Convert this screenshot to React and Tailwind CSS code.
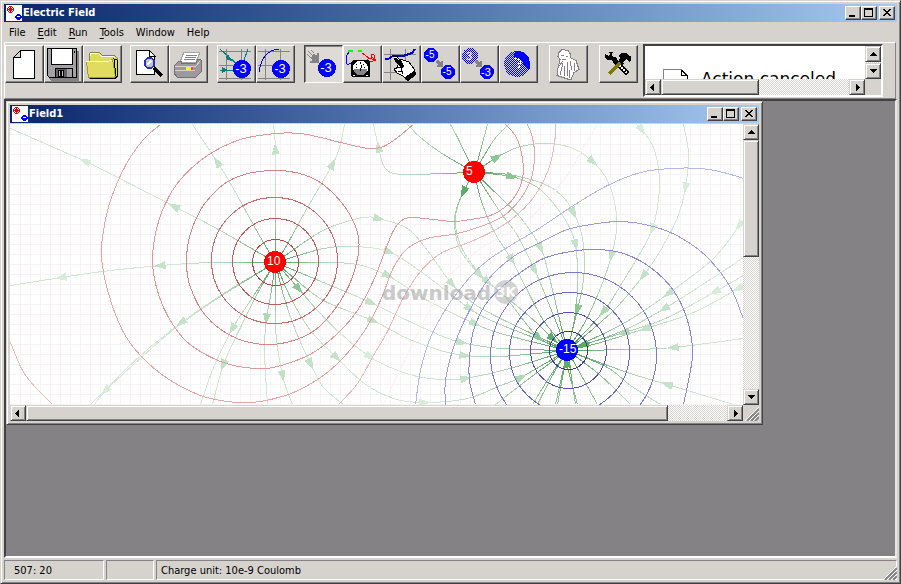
import React from "react";

/* ---------- window chrome ---------- */

const raised =
  "bg-[#d6d3ce] border border-t-[#d6d3ce] border-l-[#d6d3ce] border-r-[#424142] border-b-[#424142] shadow-[inset_1px_1px_0_#fff,inset_-1px_-1px_0_#848284]";
const button =
  "bg-[#d6d3ce] border border-t-white border-l-white border-r-[#424142] border-b-[#424142] shadow-[inset_-1px_-1px_0_#848284]";
const track =
  "bg-[repeating-conic-gradient(#d6d3ce_0_25%,#fff_0_50%)] bg-[length:2px_2px]";

function AppIcon() {
  return (
    <svg width="16" height="16" viewBox="0 0 16 16" shapeRendering="crispEdges" className="shrink-0">
      <rect width="16" height="16" fill="#fff" />
      <path d="M3 1h3v1h1v1h1v3h-1v1h-1v1h-3v-1h-1v-1h-1v-3h1v-1h1z" fill="#d8000c" />
      <path d="M3 2h1v1h-1zM5 2h1v1h-1zM2 3h1v1h-1zM6 3h1v1h-1zM2 5h1v1h-1zM6 5h1v1h-1zM3 6h1v1h-1zM5 6h1v1h-1z" fill="#fff" />
      <path d="M11 9h3v1h1v1h1v2h-1v1h-1v1h-3v-1h-1v-1h-1v-2h1v-1h1z" fill="#00f" />
      <rect x="11" y="11" width="3" height="1" fill="#fff" />
    </svg>
  );
}

function CaptionButtons() {
  const cls = `${button} flex h-3.5 w-4 items-center justify-center`;
  return (
    <div className="flex pr-0.5">
      <button aria-label="Minimize" className={cls}>
        <svg width="12" height="10" shapeRendering="crispEdges"><path d="M2 7h6v2H2z" /></svg>
      </button>
      <button aria-label="Maximize" className={cls}>
        <svg width="12" height="10" shapeRendering="crispEdges">
          <path d="M1 0h9v9H1zM2 2v6h7V2z" fillRule="evenodd" />
        </svg>
      </button>
      <button aria-label="Close" className={`${cls} ml-0.5`}>
        <svg width="12" height="10" shapeRendering="crispEdges">
          <path d="M2 1h2v1h1v1h2V2h1V1h2v1H9v1H8v1H7v1h1v1h1v1h1v1H8V7H7V6H5v1H4v1H2V7h1V6h1V5h1V4H4V3H3V2H2z" />
        </svg>
      </button>
    </div>
  );
}

function TitleBar({ title }) {
  return (
    <header className="flex h-[18px] shrink-0 items-center bg-linear-to-r from-[#0a246a] to-[#a6caf0] pl-0.5">
      <AppIcon />
      <h1 className="flex-1 pl-px text-[11px] leading-4 font-bold text-white">{title}</h1>
      <CaptionButtons />
    </header>
  );
}

const arrows = {
  up: "M4 2h1v1h1v1h1v1h1v1H1V5h1V4h1V3h1z",
  down: "M1 2h7v1H7v1H6v1H5v1H4V5H3V4H2V3H1z",
  left: "M5 1v7H4V7H3V6H2V5H1V4h1V3h1V2h1V1z",
  right: "M3 1v7h1V7h1V6h1V5h1V4H6V3H5V2H4V1z",
};

function ScrollButton({ dir }) {
  return (
    <button aria-label={`Scroll ${dir}`} className={`${raised} flex size-4 shrink-0 items-center justify-center`}>
      <svg width="9" height="9" shapeRendering="crispEdges"><path d={arrows[dir]} /></svg>
    </button>
  );
}

function Grip() {
  return (
    <svg width="14" height="14" viewBox="0 0 14 14" className="shrink-0" stroke="#848284" strokeWidth="2">
      <path d="M2 14 14 2M6 14 14 6M10 14l4-4" />
      <path d="M0 14 14 0M4 14 14 4M8 14l6-6" stroke="#fff" strokeWidth="1" />
    </svg>
  );
}

/* ---------- toolbar icons ---------- */

function Svg({ children }) {
  return (
    <svg width="36" height="34" viewBox="0 0 36 34" shapeRendering="crispEdges" fill="none" className="shrink-0">
      {children}
    </svg>
  );
}

const Ball = ({ x, y, r = 9, t = "-3", s = 13, fill = "#00f" }) => (
  <>
    <circle cx={x} cy={y} r={r} fill={fill} />
    <text x={x - 1} y={y + Math.round(s / 3)} fontSize={s} fill="#fff" textAnchor="middle" fontFamily="'Liberation Sans', Arial, sans-serif">
      {t}
    </text>
  </>
);

const Grid = () => (
  <path d="M1 4.500h32M1 18.500h32M1 31.500h32M8.500 2v31M23.500 2v31" stroke="#848284" />
);

const SmallArrow = ({ x, y }) => (
  <path transform={`translate(${x} ${y})`} d="M1 0h2v1h1v1h1v-1h2v6h-6v-2h1v-1h-1v-1h-1v-2h1z" fill="#848284" />
);

const icons = {
  New: (
    <Svg>
      <path d="M14.500 3.500h14v28h-21v-21z" fill="#fff" stroke="#000" />
      <path d="M14.500 3.500v7h-7z" fill="#d6d3ce" stroke="#000" />
    </Svg>
  ),
  Save: (
    <Svg>
      <path d="M4 4h30v30H6l-2-2z" fill="#848284" />
      <path d="M2.500 1.500h29v29h-27l-2-2z" fill="#a5a2a5" stroke="#000" />
      <path d="M6.500 1.500h21v16h-21z" fill="#fff" stroke="#000" />
      <path d="M29 4h1v2h-1z" fill="#000" />
      <path d="M10.500 21.500h17v9h-17z" fill="#636163" stroke="#000" />
      <path d="M13.500 23.500h5v6h-5z" fill="#c6c3c6" stroke="#000" />
      <path d="M15 24h2v5h-2z" fill="#000" />
      <path d="M22 22h5v8h-5z" fill="#a5a2a5" />
    </Svg>
  ),
  Open: (
    <Svg>
      <path d="M5 10V7l2-2h8l3 3h12l3 3v18l-2 2H5z" fill="#dedb58" stroke="#848242" />
      <path d="M6 9V7l2-1h6l3 3h12l2 2" stroke="#fff" />
      <path d="M2.500 14.500h22l3-2h1l3 17-2 1h-25z" fill="#e0dc60" stroke="#a09c30" />
      <path d="M2 14h23l3-1" stroke="#fffbc0" />
      <path d="M6 31.500h25l2-2V13l-3-1 2 17" stroke="#000" />
    </Svg>
  ),
  Preview: (
    <Svg>
      <path d="M5.500 3.500h13l5 5v19h-18z" fill="#fff" stroke="#000" />
      <path d="M18.500 3.500v6h6z" stroke="#000" fill="#fff" />
      <path d="m23 21 8 8" stroke="#000" strokeWidth="3" />
      <circle cx="18.500" cy="16" r="5" fill="#c6c3c6" stroke="#2734b8" strokeWidth="2" />
      <path d="m16 18 4-4" stroke="#fff" strokeWidth="2" />
    </Svg>
  ),
  Print: (
    <Svg>
      <path d="M14 5h16l-4 10H10z" fill="#fff" stroke="#a5a2a5" />
      <path d="M16 8h11M15 10h11M14 12h11" stroke="#848284" />
      <path d="m4 19 5-5h2v2h15l2-4 3 1v12l-5 5H7l-3-4z" fill="#9c9a9c" stroke="#737173" />
      <path d="M5 19h21l4-5M5 23h20" stroke="#d6d3ce" />
      <path d="M16 20h7v3h-7z" fill="#ff0" /><path d="M21 20h2v3h-2z" fill="#f44" />
    </Svg>
  ),
  "Field lines": (
    <Svg>
      <Grid />
      <path d="m2 2 18 16M2 23h18M30 2l-5 14" stroke="#007f7c" />
      <path d="m8 9 2-2 4 7-5-1zM4 20l6 3-6 3z" fill="#007f7c" />
      <Ball x={24} y={22} />
    </Svg>
  ),
  Equipotential: (
    <Svg>
      <Grid />
      <path d="M2 25c2-14 8-22 20-23" stroke="#0000c8" />
      <Ball x={24} y={22} />
    </Svg>
  ),
  "Move charge": (
    <Svg>
      <path d="m2 7 4 4M3 4l5 5M6 3l3 3" stroke="#848284" />
      <path d="M8 7h2v1h2V6h2v10H5v-2h2v-2H6v-2h1V8h1z" fill="#848284" />
      <Ball x={22} y={21} />
    </Svg>
  ),
  Measure: (
    <Svg>
      <path d="M3 17c-2-3-1-9 2-12M3 18l4-2" stroke="#00f" />
      <path d="M4 4h5M14 4h4" stroke="#0f0" strokeWidth="2" />
      <path d="m18 6 7 5 6 2-1-5-2-1-1 3 5 3M25 11l-2 2 4 2 4-2" stroke="#f00" />
      <path d="M9 13h15l2 2v14l-1 1H9l-2-1V15z" fill="#000" />
      <path d="M14 14h5l4 3 1 3v3l-3 3h-9l-3-3v-3l1-3z" fill="#fff" />
      <path d="M10 22h13v2l-3 4h-7l-3-4z" fill="#848284" />
      <path d="m16 24 2-6M12 20l1 1M21 20l-1 1M16 15v2M12 17l1 1M20 17l-1 1" stroke="#000" />
      <path d="M9 28h2M22 28h2" stroke="#fff" />
    </Svg>
  ),
  "Draw line": (
    <Svg>
      <path d="M7.500 2v31M22.500 2v31M1 7.500h32M1 25.500h18" stroke="#848284" />
      <path d="M2 12h3l5-3h10l9-3 3-4" stroke="#00c" strokeWidth="2" />
      <path d="m17 12 9 3 5 7 1 3-9 6-5-3-4-2-3-4 3-1z" fill="#fff" stroke="#000" />
      <path d="m10 8 5 2 4 5 2 4-2 2-5-4-3-5z" fill="#000" />
      <path d="m11 10 3 1 2 2" stroke="#fff" />
      <path d="m13 21 5-1 1 4m-4 1 4-1 1 3" stroke="#000" />
      <path d="m22 30 9-6 2 2v2l-8 6-2-1z" fill="#000" />
    </Svg>
  ),
  "Copy charge": (
    <Svg>
      <Ball x={9} y={8} r={7} t="-5" s={10} />
      <SmallArrow x={14} y={13} />
      <Ball x={26} y={25} r={7} t="-5" s={10} />
    </Svg>
  ),
  "Change charge": (
    <Svg>
      <Ball x={9} y={9} r={8} t="3" s={11} fill="url(#dither)" />
      <SmallArrow x={14} y={13} />
      <Ball x={26} y={25} r={7} t="-3" s={11} />
    </Svg>
  ),
  "Invert charge": (
    <Svg>
      <circle cx="17" cy="17" r="13" fill="url(#dither)" />
      <path d="M15 4h5l5 2 4 5 1 5v5l-1 2-5-4-1-5-4-3-5-1z" fill="#00f" />
      <path d="m14 11 6 2 1 3-3 1 2 2-2 3" stroke="#fff" />
    </Svg>
  ),
  Ghost: (
    <Svg>
      <path d="m12 2.500 6 1 2 3v4l6 3 3 9-5 3-3 7h-2l-6-2-6-2 1-7 2-9-2-3 1-4z" fill="#fff" stroke="#848284" />
      <path d="M11 8h3M16 9h2M12 12l4 1M13 16l-3 12M15 19l-1 10M17 15l1 6-1 8M20 14l2 9M24 16l1 8M20 23l-1 8M9 19l4-5" stroke="#848284" />
    </Svg>
  ),
  Options: (
    <Svg>
      <path d="m15 14 13 13" stroke="#000" strokeWidth="5" />
      <path d="m15 14 12 12" stroke="#fff" strokeWidth="2" strokeDasharray="2 1" />
      <path d="m9 27 12-12" stroke="#7f7a00" strokeWidth="4" />
      <path d="M9 5h4l-1 3 1 2h3l2 4-3 3-4-4H7l-2-3V7l4 2 1-2z" fill="#000" />
      <path d="m18 9 3-3h5l3 3h2v5l-2 1-3-3-3 3 1 2-2 1-3-4 1-4z" fill="#000" />
    </Svg>
  ),
};

const groups = [
  { gap: "", names: ["New", "Save", "Open"] },
  { gap: "ml-2", names: ["Preview", "Print"] },
  { gap: "ml-[9px]", names: ["Field lines", "Equipotential"] },
  { gap: "ml-[9px]", names: ["Move charge", "Measure", "Draw line", "Copy charge", "Change charge", "Invert charge"] },
  { gap: "ml-[11px]", names: ["Ghost"] },
  { gap: "ml-[11px]", names: ["Options"] },
];

function ToolButton({ name }) {
  const pressed = name === "Move charge";
  const look = pressed
    ? "border border-t-[#424142] border-l-[#424142] border-r-white border-b-white bg-[#dedbd6] shadow-[inset_1px_1px_0_#848284]"
    : button;
  return (
    <button aria-label={name} aria-pressed={pressed} className={`${look} flex h-[38px] w-[39px] shrink-0 items-center justify-start`}>
      {icons[name]}
    </button>
  );
}

function HelpPane() {
  return (
    <section className="mt-px ml-[5px] flex h-[53px] w-60 shrink-0 flex-col border-2 border-t-[#424142] border-r-white border-b-white border-l-[#424142] bg-[#d6d3ce]">
      <div className="flex h-[33px]">
        <div className="flex flex-1 items-start gap-3 overflow-hidden bg-white pt-[23px] pl-[18px]">
          <svg width="26" height="30" viewBox="0 0 26 30" shapeRendering="crispEdges" fill="none" className="shrink-0">
            <path d="M.5 30V.5h18" stroke="#848284" />
            <path d="M18.500 1v5h6v24M18.500 1l6 6" stroke="#000" />
          </svg>
          <p className="font-['DejaVu_Sans',sans-serif] text-[17px] leading-5 whitespace-nowrap">Action canceled</p>
        </div>
        <div className={`${track} flex flex-col justify-between`}>
          <ScrollButton dir="up" />
          <ScrollButton dir="down" />
        </div>
      </div>
      <div className={`${track} mr-4 flex h-4`}>
        <ScrollButton dir="left" />
        <div className={`${raised} w-[98px]`} />
        <span className="flex-1" />
        <ScrollButton dir="right" />
      </div>
    </section>
  );
}

/* ---------- field plot ---------- */

// Catmull-Rom spline through the points, as an SVG path
function spline(pts, closed) {
  const n = pts.length;
  const at = (i) => (closed ? pts[(i + n) % n] : pts[Math.max(0, Math.min(n - 1, i))]);
  let d = `M${pts[0][0]} ${pts[0][1]}`;
  for (let i = 0; i < (closed ? n : n - 1); i++) {
    const [a, b, c, e] = [at(i - 1), at(i), at(i + 1), at(i + 2)];
    d += `C${b[0] + (c[0] - a[0]) / 6} ${b[1] + (c[1] - a[1]) / 6} ${c[0] - (e[0] - b[0]) / 6} ${c[1] - (e[1] - b[1]) / 6} ${c[0]} ${c[1]}`;
  }
  return d;
}

const P = [275, 262];
const Q = [474, 172];
const N = [567, 350];

const contours = [
  { c: "#d88484", closed: true, p: [[186, 262], [190, 233], [205, 202], [233, 178], [275, 170], [313, 178], [341, 202], [357, 232], [357, 258], [345, 292], [320, 325], [296, 339], [265, 344], [232, 336], [205, 315], [190, 287]] },
  { c: "#e09898", p: [[413, 124], [397, 137], [383, 146], [368, 148], [340, 142], [320, 137], [300, 133], [275, 133], [240, 139], [207, 155], [180, 179], [164, 205], [155, 233], [152, 260], [156, 287], [167, 315], [184, 339], [207, 355], [233, 365], [265, 368], [290, 362], [313, 352], [337, 333], [357, 310], [373, 280], [384, 252], [392, 232], [400, 221], [410, 217], [433, 219], [453, 221], [470, 219], [490, 215], [504, 207], [515, 195], [522, 178], [522, 158], [516, 137], [505, 124]] },
  { c: "#e6a6a6", p: [[160, 124], [143, 139], [125, 165], [110, 200], [103, 230], [101, 257], [108, 293], [122, 330], [140, 355], [167, 378], [200, 395], [227, 401], [250, 402], [270, 399], [293, 392], [320, 377], [343, 357], [363, 332], [380, 300], [393, 267], [407, 248], [427, 238], [457, 233], [483, 225], [502, 216], [518, 201], [530, 180], [534, 157], [532, 137], [527, 124]] },
  { c: "#ecb8b8", p: [[10, 342], [22, 370], [36, 388], [52, 404]] },
  { c: "#ecb8b8", p: [[338, 404], [357, 383], [373, 355], [387, 331], [403, 297], [420, 271], [440, 253], [468, 242], [488, 233], [511, 219], [533, 197], [548, 169], [554, 143], [555, 124]] },
  { c: "#fbf0f0", p: [[383, 404], [403, 362], [432, 304], [454, 270], [480, 248], [527, 220], [563, 180], [583, 147], [597, 124]] },
  { c: "#868ad2", p: [[475, 404], [469, 380], [469, 357], [473, 330], [485, 304], [501, 287], [520, 272], [543, 258], [570, 251], [597, 249], [623, 253], [650, 267], [673, 290], [687, 320], [692, 355], [683, 404]] },
  { c: "#9a9edc", p: [[445, 404], [445, 380], [453, 347], [467, 314], [487, 280], [513, 256], [540, 242], [567, 229], [597, 223], [623, 221], [653, 226], [680, 237], [707, 257], [730, 287], [743, 319]] },
  { c: "#b4b6e6", p: [[415, 404], [420, 370], [430, 337], [447, 306], [470, 276], [487, 260], [510, 245], [540, 227], [573, 205], [607, 185], [640, 172], [670, 168], [700, 168], [723, 172], [743, 178]] },
];

const rings = [
  [275, 262, 23, "#b84848"], [275, 261, 43, "#c45c5c"], [274, 260, 63, "#cc6c6c"],
  [568, 350, 19, "#34389c"], [568, 350, 38, "#5054b0"], [569, 352, 60, "#686cc0"], [573, 355, 83, "#787cc8"],
];

// Points run along the field direction; a truthy third value puts an arrowhead there
const lines = [
  [P, [218, 229], [174, 206, 1], [127, 182], [85, 161, 1], [10, 128]],
  [P, [260, 237], [230, 183], [217, 162, 1], [192, 124]],
  [P, [275, 200], [275, 149, 1], [273, 124]],
  [P, [285, 247], [307, 207], [332, 164, 1], [339, 147], [344, 124]],
  [P, [213, 262], [160, 265, 1], [102, 271], [61, 277, 1], [10, 285]],
  [P, [220, 295], [181, 322, 1], [140, 355], [104, 390], [90, 404]],
  [P, [220, 296], [177, 326], [142, 356], [105, 390, 1], [94, 404]],
  [P, [250, 300], [232, 328, 1], [213, 367], [200, 404]],
  [P, [258, 291], [240, 327], [223, 364, 1], [212, 404]],
  [P, [271, 290], [266, 318, 1], [264, 345], [265, 373], [267, 404]],
  [P, [275, 327], [282, 375, 1], [292, 404]],
  [P, [283, 295], [295, 330], [310, 363, 1], [323, 387], [343, 404]],
  [P, [290, 297], [310, 330], [336, 357, 1], [364, 383], [393, 398], [423, 402, 1], [467, 398], [500, 385], [520, 377, 1], N],
  [P, [298, 288, 1], [317, 310], [340, 333], [369, 356, 1], [390, 367], [417, 376], [443, 379], [465, 378, 1], [513, 367], N],
  [P, [293, 277], [323, 300], [372, 320, 1], [407, 338], [440, 350], [464, 355, 1], [500, 356], N],
  [P, [323, 282], [370, 302, 1], [407, 320], [440, 335], [461, 342, 1], [500, 348], N],
  [P, [323, 262], [357, 264], [387, 275, 1], [427, 300], [474, 323, 1], [500, 333], N],
  [P, [323, 248], [353, 246], [388, 251, 1], [423, 273], [469, 308, 1], [500, 324], N],
  [P, [317, 233], [340, 223], [363, 217], [378, 218, 1], [407, 228], [427, 250], [451, 283, 1], [473, 303], [500, 318], N],
  [Q, [440, 173], [417, 174], [393, 173], [383, 165], [378, 147, 1], [373, 124]],
  [Q, [440, 152], [420, 137], [407, 124]],
  [Q, [457, 137], [450, 124]],
  [Q, [480, 150], [487, 124]],
  [Q, [493, 140], [508, 124]],
  [Q, [496, 157, 1], [517, 147], [543, 143], [570, 147], [592, 161, 1], [607, 180], [615, 207], [616, 230], [611, 255, 1], [603, 280], [587, 317], N],
  [Q, [511, 176, 1], [537, 187], [553, 203], [567, 223], [575, 244, 1], [577, 277], [575, 313], N],
  [Q, [500, 173], [523, 177], [547, 185], [563, 197], [573, 212, 1], [581, 233], [584, 260], [582, 287], [577, 309, 1], N],
  [Q, [503, 200], [520, 217], [540, 247, 1], [548, 273], [560, 323], N],
  [Q, [500, 212], [517, 235], [534, 269, 1], [547, 300], N],
  [Q, [480, 198], [493, 230], [511, 259, 1], [527, 290], [543, 320], N],
  [Q, [463, 191, 1], [456, 210], [455, 226], [460, 245], [471, 263], [487, 281, 1], [510, 300], [537, 323], [552, 338, 1], N],
  [Q, [463, 191], [455, 212], [454, 226], [460, 250], [479, 274, 1], [505, 297], [538, 337, 1], N],
  [[636, 124], [641, 129, 1], [653, 147], [659, 177], [657, 207], [652, 228, 1], [643, 247], [623, 280], [603, 311, 1], N],
  [[683, 124], [688, 153], [685, 187, 1], [677, 217], [660, 250], [643, 275, 1], [613, 310], N],
  [[743, 220], [739, 225, 1], [713, 258], [668, 293, 1], [623, 323], N],
  [[743, 257], [713, 277], [664, 308, 1], [623, 330], N],
  [[743, 275], [715, 291, 1], [665, 318], [624, 332, 1], [583, 344, 1], N],
  [[743, 286], [738, 288, 1], [693, 312], [645, 328, 1], [600, 342], N],
  [[743, 338], [673, 347, 1], [630, 349], N],
  [[733, 404], [697, 393], [667, 384, 1], [627, 372], N],
  [[660, 404], [630, 385], [607, 367], N],
  [[630, 404], [600, 375], N],
  [[597, 404], N],
  [[577, 404], [566, 362, 1], N],
  [[575, 404], N],
  [[557, 404], N],
  [[555, 404], N],
  [[537, 404], [553, 373], N],
  [[532, 404], [550, 375], N],
  [[495, 404], [530, 377], N],
];

const paths = lines.map((l) => spline(l)).join("");

let gridPath = "";
for (let x = 20; x < 743; x += 10) gridPath += `M${x} 124h1v281h-1z`;
for (let y = 134; y < 405; y += 10) gridPath += `M10 ${y}h733v1H10z`;

const heads = lines.flatMap((l) =>
  l.flatMap((pt, i) => {
    if (!pt[2]) return [];
    const a = l[i - 1];
    const b = l[i + 1] || pt;
    const angle = (Math.atan2(b[1] - a[1], b[0] - a[0]) * 180) / Math.PI;
    const near = Math.min(...[P, Q, N].map((c) => Math.hypot(c[0] - pt[0], c[1] - pt[1])));
    const fill = near < 24 ? "#5cac68" : near < 45 ? "#8cc694" : near < 75 ? "#b0d8b4" : near < 130 ? "#c4e2c8" : "#d8ecda";
    return [{ x: pt[0], y: pt[1], angle, fill }];
  })
);

function Charge({ at, value, color }) {
  return (
    <>
      <circle cx={at[0]} cy={at[1]} r="11" fill={color} />
      <text x={at[0] - 8} y={at[1] + 3} fill="#fff" fontSize="12" fontFamily="'Liberation Sans', Arial, sans-serif">
        {value}
      </text>
    </>
  );
}

function FieldPlot() {
  return (
    <svg viewBox="10 124 733 281" preserveAspectRatio="xMinYMin slice" className="block h-full w-full bg-white" role="img" aria-label="Electric field" fill="none">
      <defs>
        <pattern id="dither" width="2" height="2" patternUnits="userSpaceOnUse">
          <path d="M0 0h1v1H0zM1 1h1v1H1z" fill="#00f" />
        </pattern>
        {[P, Q, N].map((c, i) => (
          <radialGradient key={i} id={`fade${i}`} gradientUnits="userSpaceOnUse" cx={c[0]} cy={c[1]} r={i === 2 ? 140 : 100}>
            <stop offset="0.1" stopColor="#2c8438" stopOpacity="0.7" />
            <stop offset="0.5" stopColor="#4c9c58" stopOpacity="0.25" />
            <stop offset="1" stopColor="#4c9c58" stopOpacity="0" />
          </radialGradient>
        ))}
      </defs>
      <path d={gridPath} fill="#f6f2f6" shapeRendering="crispEdges" />
      <g shapeRendering="crispEdges">
        <g transform="translate(0.5 0.5)">
          <path d={paths} stroke="#d2e6d4" />
          <path d={paths} stroke="url(#fade0)" />
          <path d={paths} stroke="url(#fade1)" />
          <path d={paths} stroke="url(#fade2)" />
          {heads.map((h, i) => (
            <path key={i} d="M7 0-5 4V-4z" fill={h.fill} transform={`translate(${h.x} ${h.y}) rotate(${h.angle})`} />
          ))}
          {contours.map((k, i) => (
            <path key={i} d={spline(k.p, k.closed)} stroke={k.c} />
          ))}
          {rings.map(([x, y, r, c]) => (
            <circle key={`${x}-${r}`} cx={x} cy={y} r={r} stroke={c} />
          ))}
        </g>
        <Charge at={P} value="10" color="#f00" />
        <Charge at={Q} value="5" color="#f00" />
        <Charge at={N} value="-15" color="#00f" />
      </g>
      <g opacity="0.6" fontFamily="'DejaVu Sans', sans-serif" fontWeight="bold">
        <text x="382" y="300" fontSize="20" fill="#a8a8a8">download</text>
        <circle cx="506" cy="292" r="12" fill="#b8b8b8" />
        <text x="506" y="297" fontSize="14" fill="#fff" textAnchor="middle">3K</text>
      </g>
    </svg>
  );
}

function FieldWindow() {
  return (
    <section className={`${raised} flex w-[757px] max-w-full flex-col p-[3px]`}>
      <TitleBar title="Field1" />
      <div className="mt-px flex">
        <div className="h-[281px] min-w-0 flex-1">
          <FieldPlot />
        </div>
        <div className={`${track} flex w-4 flex-col`}>
          <ScrollButton dir="up" />
          <div className={`${raised} h-[117px]`} />
          <span className="flex-1" />
          <ScrollButton dir="down" />
        </div>
      </div>
      <div className="flex h-4">
        <div className={`${track} flex min-w-0 flex-1`}>
          <ScrollButton dir="left" />
          <div className={`${raised} w-[642px]`} />
          <span className="flex-1" />
          <ScrollButton dir="right" />
        </div>
        <div className="flex w-4 items-end justify-end">
          <Grip />
        </div>
      </div>
    </section>
  );
}

/* ---------- main window ---------- */

const menus = [["F", "ile", false], ["E", "dit", true], ["R", "un", true], ["T", "ools", true], ["W", "indow", false], ["H", "elp", false]];
const panel = "flex items-center border border-t-[#848284] border-r-white border-b-white border-l-[#848284] pt-0.5";

export default function App() {
  return (
    <main className={`${raised} flex h-screen w-full flex-col overflow-hidden p-[3px] font-['DejaVu_Sans_Condensed','DejaVu_Sans',sans-serif] text-[11px] leading-4 text-black`}>
      <TitleBar title="Electric Field" />
      <nav className="flex h-5 shrink-0 items-center gap-3 pt-0.5 pl-[5px]">
        {menus.map(([k, rest, line]) => (
          <button key={k} className="leading-4">
            <span className={line ? "underline underline-offset-2" : ""}>{k}</span>
            {rest}
          </button>
        ))}
      </nav>
      <div className="mr-px flex h-[57px] shrink-0 items-start border border-white border-b-[#848284] border-r-[#848284]">
        <div className="flex pt-0.5">
          {groups.map((g) => (
            <div key={g.names[0]} className={`flex ${g.gap}`}>
              {g.names.map((n) => <ToolButton key={n} name={n} />)}
            </div>
          ))}
        </div>
        <HelpPane />
      </div>
      <div className="mb-0.5 flex min-h-0 flex-1 items-start overflow-hidden border-2 border-t-[#424142] border-r-[#e8e6e2] border-b-white border-l-[#424142] bg-[#848284]">
        <FieldWindow />
      </div>
      <footer className="flex h-5 shrink-0 gap-0.5">
        <div className={`${panel} w-[100px] pl-[9px]`}>507: 20</div>
        <div className={`${panel} w-12`} />
        <div className={`${panel} flex-1 pl-1`}>Charge unit: 10e-9 Coulomb</div>
        <div className="-ml-4 flex items-end">
          <Grip />
        </div>
      </footer>
    </main>
  );
}
